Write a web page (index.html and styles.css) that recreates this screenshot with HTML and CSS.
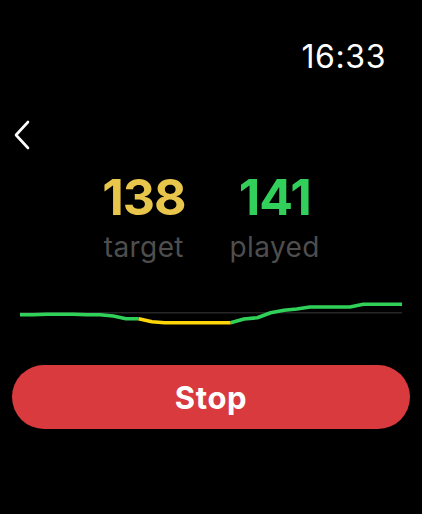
FILE: index.html
```html
<!DOCTYPE html>
<html lang="en">

<head>
    <meta charset="UTF-8">
    <meta name="viewport" content="width=device-width, initial-scale=1.0">
    <title>Workout</title>
    <link rel="stylesheet" href="styles.css">
</head>

<body>
    <div class="screen">
        <div class="status">
            <span class="time">16:33</span>
        </div>

        <div class="nav">
            <a class="back" href="javascript:;">
                <svg width="18" height="30" viewBox="0 0 18 30">
                    <polyline points="15,2 3,15 15,28" fill="none" stroke="#ffffff" stroke-width="2.6" stroke-linecap="round" stroke-linejoin="round" />
                </svg>
            </a>
        </div>

        <div class="stats">
            <div class="stat">
                <div class="num target">138</div>
                <div class="label">target</div>
            </div>
            <div class="stat">
                <div class="num played">141</div>
                <div class="label">played</div>
            </div>
        </div>

        <!-- 曲线 -->
        <div class="chart">
            <svg width="422" height="40" viewBox="0 290 422 40">
                <line x1="20" y1="312.7" x2="402" y2="312.7" stroke="#262626" stroke-width="1.6" />
                <polyline class="green" points="20,314.7 33.3,314.7 46.7,314.3 60,314.3 73.3,314.3 86.7,314.7 100,314.7 113.3,316 126,318.7 138.7,318.7" />
                <polyline class="yellow" points="138.7,318.7 152,321.7 164.7,322.7 178,322.7 191.3,322.7 204.7,322.7 218,322.7 230.7,322.7" />
                <polyline class="green" points="230.7,322.7 244,319 257.3,317.7 270.7,312.7 284,310.3 296.7,309 310,307 323.3,307 336.7,307 350,307 363.3,304.3 376.7,304.3 390,304.3 402,304.3" />
            </svg>
        </div>

        <div class="actions">
            <button class="stop" type="button">Stop</button>
        </div>
    </div>
</body>

</html>
```

FILE: styles.css
```css
* {
    margin: 0;
    padding: 0;
    box-sizing: border-box;
}

body {
    background-color: #000000;
    color: #ffffff;
    font-family: "Inter", "Liberation Sans", sans-serif;
}

.screen {
    width: 422px;
    height: 514px;
    display: flex;
    flex-direction: column;
}

.status {
    display: flex;
    justify-content: flex-end;
    padding: 38px 36px 0 0;
    height: 80px;
    flex-shrink: 0;
}

.time {
    font-size: 32px;
    line-height: 38px;
    font-weight: 400;
    letter-spacing: 0.6px;
}

.nav {
    height: 89px;
    padding: 40px 0 0 13px;
    flex-shrink: 0;
}

.back {
    display: block;
    width: 18px;
    height: 30px;
}

.stats {
    display: flex;
    justify-content: center;
    gap: 44px;
}

.stat {
    display: flex;
    flex-direction: column;
    align-items: center;
}

.num {
    font-size: 50px;
    line-height: 56px;
    font-weight: 700;
    letter-spacing: -1px;
}

.target {
    color: #e8c64c;
}

.played {
    color: #32d05a;
}

.label {
    margin-top: 5px;
    font-size: 28px;
    line-height: 34px;
    color: #4e4e4e;
    letter-spacing: 0.4px;
}

.chart {
    margin-top: 26px;
    height: 40px;
    flex-shrink: 0;
}

.chart svg {
    display: block;
}

.chart polyline {
    fill: none;
    stroke-width: 3.6;
    stroke-linejoin: round;
}

.chart .green {
    stroke: #30d158;
}

.chart .yellow {
    stroke: #ffd60a;
}

.actions {
    padding: 35px 12px 0;
}

.stop {
    display: block;
    width: 100%;
    height: 64px;
    border: none;
    border-radius: 32px;
    background-color: #d93a3d;
    color: #ffffff;
    font-family: "Inter", "Liberation Sans", sans-serif;
    font-size: 31px;
    font-weight: 700;
    letter-spacing: 0.6px;
}
```
